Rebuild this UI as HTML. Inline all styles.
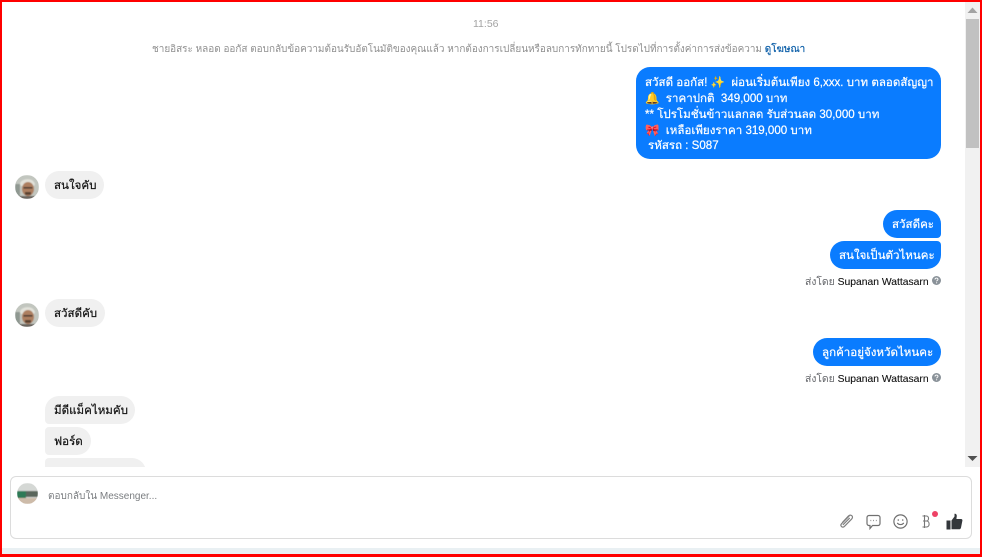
<!DOCTYPE html>
<html lang="th"><head><meta charset="utf-8">
<style>
html,body{margin:0;padding:0;background:#fff}
#p{position:relative;width:982px;height:557px;overflow:hidden;background:#fff;font-family:"Liberation Sans","Noto Sans CJK SC",sans-serif;font-size:11.55px;color:#000}
#p div,#p svg{position:absolute}
.t{white-space:nowrap;line-height:16px}
.m{color:#fff;-webkit-text-stroke:.2px #fff}
.b{height:28px;border-radius:14px;white-space:nowrap;line-height:31px;font-size:11.55px;box-sizing:border-box;padding:0 9px;-webkit-text-stroke:.2px currentColor;overflow:hidden}
.g{background:#f0f0f0;color:#111}
.u{background:#0a7cff;color:#fff}
.s{font-size:10.35px;color:#65676b}
.s b{font-weight:400;color:#111;-webkit-text-stroke:.1px #111}
</style></head><body><div id="p">

<div class="t" style="left:473px;top:16px;font-size:10.5px;color:#a3a3a3">11:56</div>
<div class="t" style="left:152px;top:42px;width:660px;font-size:9.95px;color:#8f8f8f">ชายอิสระ หลอด ออกัส ตอบกลับข้อความต้อนรับอัตโนมัติของคุณแล้ว หากต้องการเปลี่ยนหรือลบการทักทายนี้ โปรดไปที่การตั้งค่าการส่งข้อความ <span style="color:#0b5ea8;-webkit-text-stroke:.2px #0b5ea8">ดูโฆษณา</span></div>

<div style="left:636px;top:67px;width:305px;height:92px;border-radius:14px;background:#0a7cff"></div>
<div class="t m" style="left:645px;top:75px">สวัสดี ออกัส! ✨ &nbsp;ผ่อนเริ่มต้นเพียง 6,xxx. บาท ตลอดสัญญา</div>
<div class="t m" style="left:645px;top:91px"><span style="color:#f2b632">🔔</span> &nbsp;ราคาปกติ &nbsp;349,000 บาท</div>
<div class="t m" style="left:645px;top:107px">** โปรโมชั่นข้าวแลกลด รับส่วนลด 30,000 บาท</div>
<div class="t m" style="left:645px;top:123px"><span style="color:#e0445a">🎀</span> &nbsp;เหลือเพียงราคา 319,000 บาท</div>
<div class="t m" style="left:648px;top:138px">รหัสรถ : S087</div>

<svg style="left:15px;top:175px" width="24" height="24" viewBox="0 0 24 24"><defs><clipPath id="a1"><circle cx="12" cy="12" r="12"/></clipPath><filter id="bl"><feGaussianBlur stdDeviation=".6"/></filter></defs><g clip-path="url(#a1)"><g filter="url(#bl)"><rect width="24" height="24" fill="#c2c6bf"/><path d="M5 9C6 3 18 2 20 9L19 11H6Z" fill="#e2e2da"/><ellipse cx="13" cy="14" rx="6" ry="7" fill="#ad7f60"/><rect x="8.5" y="12" width="9" height="1.6" fill="#4a3a30"/><rect x="10" y="17" width="6" height="2.8" fill="#59402f"/><rect x="0" y="9" width="5" height="15" fill="#8f9891"/><rect y="21" width="24" height="3" fill="#6b655f"/></g></g></svg>
<div class="b g" style="left:45px;top:171px;width:59px">สนใจคับ</div>

<div class="b u" style="left:883px;top:210px;width:58px;border-bottom-right-radius:4px">สวัสดีคะ</div>
<div class="b u" style="left:830px;top:241px;width:111px;border-top-right-radius:4px">สนใจเป็นตัวไหนคะ</div>
<div class="t s" style="left:805px;top:275px">ส่งโดย <b>Supanan Wattasarn</b></div>
<svg style="left:932px;top:276px" width="9" height="9" viewBox="0 0 9 9"><circle cx="4.5" cy="4.5" r="4.5" fill="#8a9299"/><path d="M3 3.5C3 2.6 3.7 2.1 4.5 2.1S6 2.6 6 3.4C6 4.4 4.6 4.4 4.6 5.4" fill="none" stroke="#fff" stroke-width=".9"/><circle cx="4.6" cy="6.8" r=".6" fill="#fff"/></svg>

<svg style="left:15px;top:303px" width="24" height="24" viewBox="0 0 24 24"><defs><clipPath id="a2"><circle cx="12" cy="12" r="12"/></clipPath></defs><g clip-path="url(#a2)"><g filter="url(#bl)"><rect width="24" height="24" fill="#c2c6bf"/><path d="M5 9C6 3 18 2 20 9L19 11H6Z" fill="#e2e2da"/><ellipse cx="13" cy="14" rx="6" ry="7" fill="#ad7f60"/><rect x="8.5" y="12" width="9" height="1.6" fill="#4a3a30"/><rect x="10" y="17" width="6" height="2.8" fill="#59402f"/><rect x="0" y="9" width="5" height="15" fill="#8f9891"/><rect y="21" width="24" height="3" fill="#6b655f"/></g></g></svg>
<div class="b g" style="left:45px;top:299px;width:60px">สวัสดีคับ</div>

<div class="b u" style="left:813px;top:338px;width:128px">ลูกค้าอยู่จังหวัดไหนคะ</div>
<div class="t s" style="left:805px;top:372px">ส่งโดย <b>Supanan Wattasarn</b></div>
<svg style="left:932px;top:373px" width="9" height="9" viewBox="0 0 9 9"><circle cx="4.5" cy="4.5" r="4.5" fill="#8a9299"/><path d="M3 3.5C3 2.6 3.7 2.1 4.5 2.1S6 2.6 6 3.4C6 4.4 4.6 4.4 4.6 5.4" fill="none" stroke="#fff" stroke-width=".9"/><circle cx="4.6" cy="6.8" r=".6" fill="#fff"/></svg>

<div class="b g" style="left:45px;top:396px;width:90px;border-bottom-left-radius:4px">มีดีแม็คไหมคับ</div>
<div class="b g" style="left:45px;top:427px;width:46px;border-radius:4px 14px 14px 4px">ฟอร์ด</div>
<div class="b g" style="left:45px;top:458px;width:101px;border-top-left-radius:4px"></div>

<div style="left:2px;top:467px;width:963px;height:9px;background:#fff"></div>

<div style="left:965px;top:2px;width:15px;height:465px;background:#f1f1f1"></div>
<div style="left:966px;top:19px;width:13px;height:129px;background:#c1c1c1"></div>
<svg style="left:967px;top:7px" width="11" height="7" viewBox="0 0 11 7"><path d="M5.5 .5L10.5 6H.5Z" fill="#a3a3a3"/></svg>
<svg style="left:967px;top:455px" width="11" height="7" viewBox="0 0 11 7"><path d="M.5 1H10.5L5.5 6Z" fill="#505050"/></svg>

<div style="left:10px;top:476px;width:962px;height:63px;box-sizing:border-box;border:1px solid #dcdcdc;border-radius:6px;background:#fff"></div>
<svg style="left:17px;top:483px" width="21" height="21" viewBox="0 0 21 21"><defs><clipPath id="a3"><circle cx="10.5" cy="10.5" r="10.5"/></clipPath></defs><g clip-path="url(#a3)"><g filter="url(#bl)"><rect width="21" height="21" fill="#d5d8d5"/><rect y="15" width="21" height="6" fill="#cdbba9"/><rect x="0" y="8" width="21" height="6" fill="#5a665c"/><rect x="0" y="8" width="9" height="7" fill="#2e7a56"/></g></g></svg>
<div class="t" style="left:48px;top:489px;font-size:10px;color:#7a7d80">ตอบกลับใน Messenger...</div>

<svg style="left:838px;top:513px" width="17" height="17" viewBox="0 0 17 17" fill="none" stroke="#808080" stroke-width="1.2" stroke-linecap="round"><path d="M11 3.2L3.7 10.6c-1 1-1 2.2-.2 3s2 .7 3-.3l7-7.1c1.3-1.4 1.2-2.7.3-3.5s-2.2-.8-3.4.4L4.6 9.3"/><path d="M5.2 11.6l6.2-6.3"/></svg>
<svg style="left:866px;top:514px" width="15" height="16" viewBox="0 0 15 16" fill="none" stroke="#707070" stroke-width="1.2"><path d="M3 1.5H12A2 2 0 0 1 14 3.5V9.5A2 2 0 0 1 12 11.5H6.5L4 14.5V11.5H3A2 2 0 0 1 1 9.5V3.5A2 2 0 0 1 3 1.5Z"/><path d="M4.5 6.5h.7M7.2 6.5h.7M9.9 6.5h.7" stroke-width="1.3"/></svg>
<svg style="left:893px;top:514px" width="15" height="15" viewBox="0 0 15 15" fill="none" stroke="#707070" stroke-width="1.2"><circle cx="7.5" cy="7.5" r="6.6"/><circle cx="5.3" cy="6" r=".8" fill="#707070" stroke="none"/><circle cx="9.7" cy="6" r=".8" fill="#707070" stroke="none"/><path d="M4.5 9.3c1.6 1.7 4.4 1.7 6 0" stroke-linecap="round"/></svg>
<svg style="left:921px;top:514px" width="10" height="15" viewBox="0 0 10 15" fill="none" stroke="#777" stroke-width="1.1"><path d="M3.5 1V14M1.5 2H5.5C8.2 2 8.2 7 5.5 7H2M5.5 7C9 7 9 13 5.5 13H1.5"/></svg>
<div style="left:932px;top:511px;width:6px;height:6px;border-radius:50%;background:#ee4266"></div>
<svg style="left:946px;top:513px" width="17" height="17" viewBox="0 0 17 17"><path d="M.5 7.5H4.5V16.5H.5Z" fill="#33373b"/><path d="M5.5 7.5L8.5 3.5V.8C10 .5 10.8 1.6 10.8 3L10.4 6H15C16 6 16.6 6.8 16.4 7.6L15 14.6C14.8 15.7 14 16.3 13 16.3H5.5Z" fill="#33373b"/></svg>

<div style="left:2px;top:548px;width:978px;height:6px;background:#e9f0f3"></div>

<div style="left:0;top:0;width:982px;height:2px;background:#f00"></div>
<div style="left:0;top:554px;width:982px;height:3px;background:#f00"></div>
<div style="left:0;top:0;width:2px;height:557px;background:#f00"></div>
<div style="left:980px;top:0;width:2px;height:557px;background:#f00"></div>
</div></body></html>
